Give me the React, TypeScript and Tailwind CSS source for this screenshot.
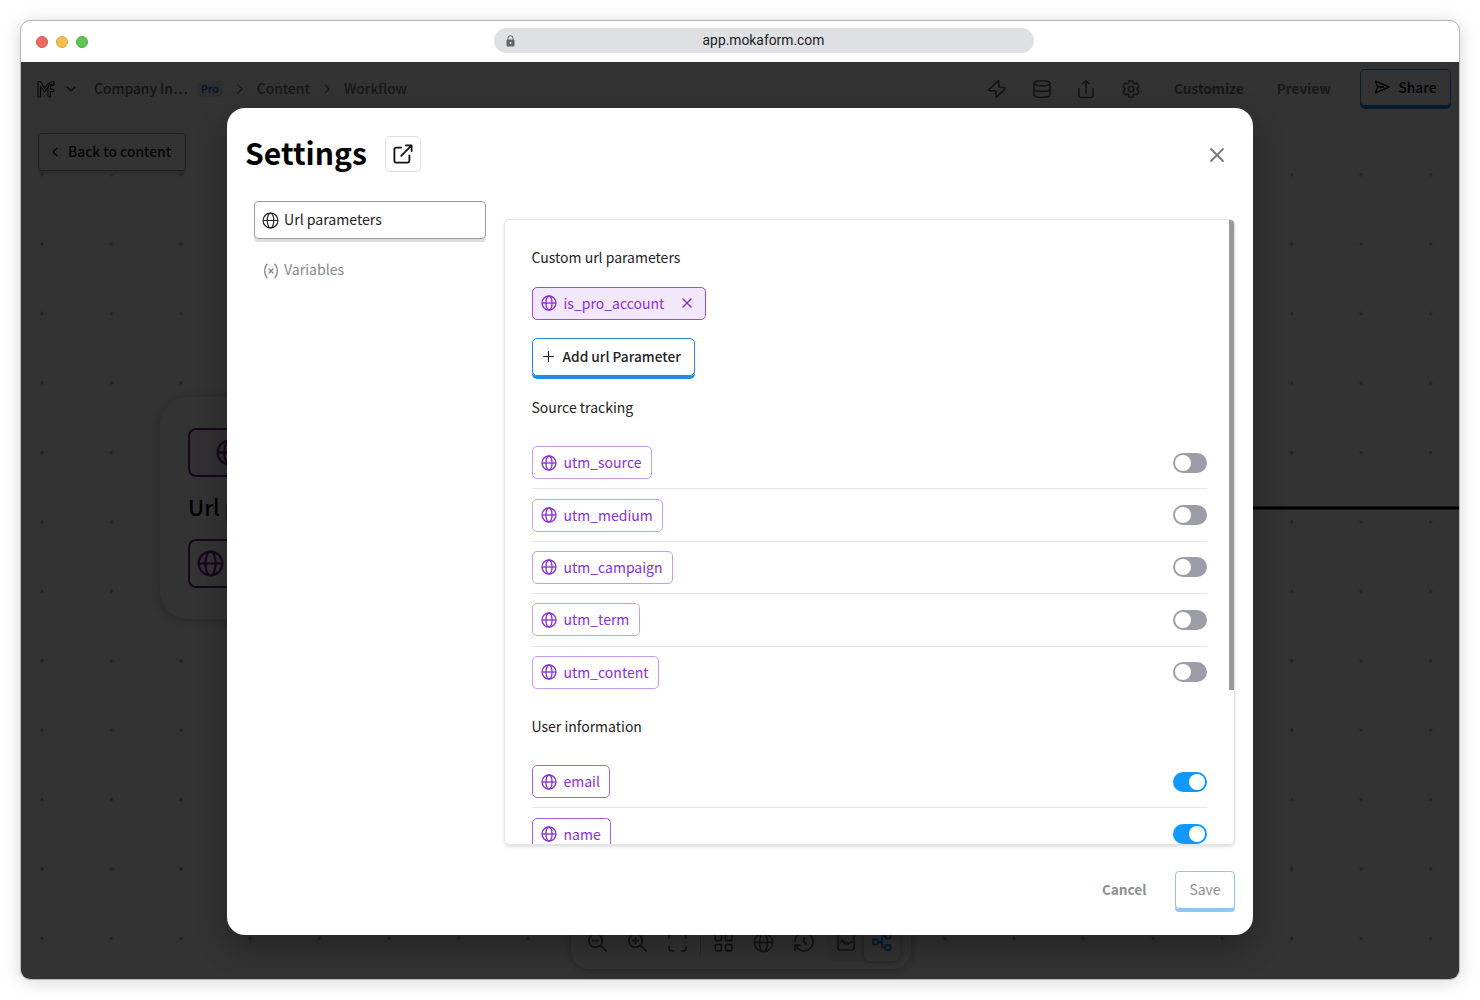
import { useState } from "react";
import { HiOutlineCog6Tooth } from "react-icons/hi2";
import {
  TbChevronDown,
  TbChevronLeft,
  TbChevronRight,
  TbHistory,
  TbLayoutGrid,
  TbMaximize,
  TbPlus,
  TbX,
  TbZoomIn,
  TbZoomOut,
} from "react-icons/tb";

type Param = { name: string; enabled: boolean };

const initialSource: Param[] = [
  { name: "utm_source", enabled: false },
  { name: "utm_medium", enabled: false },
  { name: "utm_campaign", enabled: false },
  { name: "utm_term", enabled: false },
  { name: "utm_content", enabled: false },
];

const initialUser: Param[] = [
  { name: "email", enabled: true },
  { name: "name", enabled: true },
];

const GlobeIcon = ({ className, stroke = 2 }: { className?: string; stroke?: number }) => (
  <svg viewBox="0 0 24 24" fill="none" stroke="currentColor" strokeWidth={stroke} className={className}>
    <circle cx="12" cy="12" r="10.5" />
    <ellipse cx="12" cy="12" rx="4.6" ry="10.5" />
    <path d="M1.5 12h21" />
  </svg>
);

const VariableIcon = ({ className }: { className?: string }) => (
  <svg viewBox="0 0 16 16" fill="none" stroke="currentColor" strokeWidth="1.4" strokeLinecap="round" className={className}>
    <path d="M4 1.2C.8 5 .8 11 4 14.8M12 1.2c3.2 3.8 3.2 9.8 0 13.6M6 6l4 4M10 6l-4 4" />
  </svg>
);

const OpenIcon = ({ className }: { className?: string }) => (
  <svg
    viewBox="0 0 20 20"
    fill="none"
    stroke="currentColor"
    strokeWidth="1.8"
    strokeLinecap="round"
    strokeLinejoin="round"
    className={className}
  >
    <path d="M8.3 3.6H3.2A1.8 1.8 0 0 0 1.4 5.4V16.8A1.8 1.8 0 0 0 3.2 18.6H14.6A1.8 1.8 0 0 0 16.4 16.8V11.3" />
    <path d="M8.2 11.8 18.6 1.4M13 1.4h5.6V7" />
  </svg>
);

const BoltIcon = () => (
  <svg viewBox="0 0 20 20" fill="none" stroke="currentColor" strokeWidth="1.6" strokeLinejoin="round" className="h-5 w-5">
    <path d="M11.3 1.7 1.9 10.7l.4.9 6.5.4.3 6.6 9.1-9-.4-.8-5.5-.8z" />
  </svg>
);

const DatabaseIcon = () => (
  <svg viewBox="0 0 20 20" fill="none" stroke="currentColor" strokeWidth="1.6" className="h-5 w-5">
    <ellipse cx="10" cy="4.3" rx="8" ry="2.6" />
    <path d="M2 4.3v11.4c0 1.6 3.2 2.6 8 2.6s8-1 8-2.6V4.3M2 10c0 1.5 3.2 2.4 8 2.4s8-.9 8-2.4" />
  </svg>
);

const UploadIcon = () => (
  <svg
    viewBox="0 0 20 20"
    fill="none"
    stroke="currentColor"
    strokeWidth="1.6"
    strokeLinecap="round"
    strokeLinejoin="round"
    className="h-5 w-5"
  >
    <path d="M3 9.5v7a2 2 0 0 0 2 2h10a2 2 0 0 0 2-2v-7M10 14V1.7M6.8 4.7 10 1.5l3.2 3.2" />
  </svg>
);

const SendIcon = () => (
  <svg viewBox="0 0 16 16" fill="none" stroke="currentColor" strokeWidth="1.4" strokeLinecap="round" strokeLinejoin="round" className="h-4 w-4">
    <path d="M1.5 2.2 15 8 1.5 13.8 3.6 8zM3.6 8h6" />
  </svg>
);

const Logo = ({ className }: { className?: string }) => (
  <svg viewBox="0 0 18 18" fill="none" stroke="currentColor" strokeWidth="1.2" strokeLinejoin="round" className={className}>
    <path d="M1 1.5v15.5h2.5V6.5l4 5.5 3.5-5v10h2.5v-5.500h3V9.200h-3V7c0-1.500 1-2.200 3.500-2.200V1.500c-3 0-4.500.8-6 2.500L7.500 8 3.500 1.500z" />
    <path d="M11 7l2-2.5h4" />
  </svg>
);

const Badge = ({ name, dim, onRemove }: { name: string; dim?: boolean; onRemove?: () => void }) => (
  <span
    className={`inline-flex h-[33px] items-center rounded-[5px] border pr-[9.5px] pl-[8.5px] text-[#8a2fd9] ${
      onRemove ? "border-[#9b4be0] bg-[#f3e8fb]" : dim ? "border-[#c79bee]" : "border-[#a862e6]"
    }`}
  >
    <GlobeIcon className="mr-[6.5px] h-4 w-4" />
    <span className="pb-px text-[14px] leading-5">{name}</span>
    {onRemove && (
      <button onClick={onRemove} className="ml-[15px]">
        <TbX className="h-4 w-4" />
      </button>
    )}
  </span>
);

const Toggle = ({ on, onClick }: { on: boolean; onClick: () => void }) => (
  <button
    onClick={onClick}
    className={`flex h-5 w-[34px] items-center rounded-full px-[2px] ${on ? "justify-end bg-[#1098fc]" : "justify-start bg-[#9d9da8]"}`}
  >
    <span className="h-4 w-4 rounded-full bg-white" />
  </button>
);

const ParamList = ({ items, dim, onToggle }: { items: Param[]; dim?: boolean; onToggle: (name: string) => void }) => (
  <div className="mt-[18px]">
    {items.map((item) => (
      <div
        key={item.name}
        className="flex h-[52.4px] items-center justify-between border-b border-[#e6e6e8] last:border-b-transparent"
      >
        <Badge name={item.name} dim={dim} />
        <Toggle on={item.enabled} onClick={() => onToggle(item.name)} />
      </div>
    ))}
  </div>
);

const Header = () => (
  <header className="flex h-[53px] items-center justify-between pr-[8px] pb-[2px] pl-[16px] text-[13.8px] font-medium text-[#777]">
    <div className="flex items-center pt-[2px]">
      <Logo className="h-[18px] w-[18px] text-[#333]" />
      <TbChevronDown className="ml-[8px] h-4 w-4 text-[#333]" />
      <span className="ml-[15px] text-[#666]">Company In…</span>
      <span className="ml-[9px] rounded bg-[#dcebf9] px-1 text-[10.5px] leading-4 font-bold text-[#1971c2]">Pro</span>
      <TbChevronRight className="ml-[9px] h-4 w-4" />
      <span className="ml-[9px]">Content</span>
      <TbChevronRight className="mx-[9px] h-4 w-4" />
      <span>Workflow</span>
    </div>
    <div className="flex items-center">
      <div className="flex items-center gap-[24.7px] pt-[2px] text-[#666]">
        <BoltIcon />
        <DatabaseIcon />
        <UploadIcon />
        <HiOutlineCog6Tooth className="-mx-px h-[22px] w-[22px]" strokeWidth={1.8} />
      </div>
      <span className="ml-[33px] pt-[2px] text-[13.6px] font-bold">Customize</span>
      <span className="ml-[33px] pt-[2px] text-[13.6px] font-bold">Preview</span>
      <button className="ml-[29px] flex h-[37px] w-[91px] items-center justify-center gap-[8px] rounded-[5px] border border-[#228be6] pb-px text-black shadow-[0_3px_0_#228be6]">
        <SendIcon />
        Share
      </button>
    </div>
  </header>
);

const Canvas = () => (
  <div className="relative flex-1 overflow-hidden">
    <svg className="absolute inset-0 h-full w-full">
      <defs>
        <pattern id="dots" width="69.43" height="69.43" patternUnits="userSpaceOnUse" x="-13.7" y="24.9">
          <circle cx="34.7" cy="34.7" r="1.7" fill="#a8a8a8" />
        </pattern>
      </defs>
      <rect width="100%" height="100%" fill="url(#dots)" />
      <path d="M1100 393h340" stroke="#000" strokeWidth="3" />
    </svg>

    <button className="absolute top-[18px] left-[17px] flex h-[38px] w-[148px] items-center gap-[5px] rounded-[4px] border border-[#999] bg-white pb-px pl-[8px] text-[13.8px] font-medium text-[#222] shadow-[0_3px_0_#e3e2e0]">
      <TbChevronLeft className="h-4 w-4" />
      Back to content
    </button>

    {/* workflow node */}
    <div className="absolute top-[282px] left-[139px] flex h-[222px] w-[300px] flex-col rounded-[28px] bg-white px-[28px] pt-[31px] shadow-[0_2px_12px_rgba(0,0,0,0.25)]">
      <div className="flex h-[49px] items-center rounded-lg border-2 border-[#7b1fa2] bg-[#f3e8fb] pl-[26px] text-[#7b1fa2]">
        <GlobeIcon className="h-[27px] w-[27px]" />
      </div>
      <div className="mt-[13px] mb-[16px] text-[22px] leading-[33px] font-medium text-black">Url parameters</div>
      <div className="flex h-[49px] items-center rounded-lg border-2 border-[#7b1fa2] pl-[7px] text-[#7b1fa2]">
        <GlobeIcon className="h-[27px] w-[27px]" />
      </div>
    </div>

    {/* zoom and view controls */}
    <div className="absolute bottom-[10px] left-[550px] flex h-[54px] w-[340px] items-center rounded-[18px] bg-white pl-[15px] text-[#666] shadow-[0_1px_8px_rgba(0,0,0,0.3)]">
      <TbZoomOut className="h-[23px] w-[23px]" strokeWidth={1.8} />
      <TbZoomIn className="ml-[17px] h-[23px] w-[23px]" strokeWidth={1.8} />
      <TbMaximize className="ml-[16px] h-[25px] w-[25px]" strokeWidth={1.8} />
      <span className="ml-[10px] h-[30px] w-px bg-[#ccc]" />
      <TbLayoutGrid className="ml-[10px] h-[25px] w-[25px]" strokeWidth={1.6} />
      <GlobeIcon className="ml-[17px] h-[21px] w-[21px]" />
      <TbHistory className="ml-[18px] h-[24px] w-[24px]" strokeWidth={1.8} />
      <div className="ml-[11px] flex h-[37px] items-center rounded-md bg-[#f1f1f3]">
        <svg viewBox="0 0 20 20" className="mr-[8px] ml-[9px] h-5 w-5" fill="none" stroke="currentColor" strokeWidth="1.7" strokeLinejoin="round">
          <rect x="2" y="2" width="16" height="16" rx="1.5" />
          <path d="M4 10.5l2.5-2.5 2.5 4 1.5-1.5 1.5 1.5 4-2.5" />
        </svg>
        <div className="flex h-[37px] w-[36px] items-center justify-center rounded-md bg-white text-[#228be6] shadow-[0_1px_5px_rgba(0,0,0,0.35)]">
          <svg viewBox="0 0 20 20" className="h-5 w-5" fill="none" stroke="currentColor" strokeWidth="1.9">
            <rect x="1" y="7.5" width="5" height="5" rx=".8" />
            <rect x="13.5" y="1.5" width="5" height="5" rx=".8" />
            <rect x="13.5" y="13" width="5" height="5" rx=".8" />
            <path d="M6 10h4M13.5 4h-2.2A1.3 1.3 0 0 0 10 5.3v8.9a1.3 1.3 0 0 0 1.3 1.3h2.2" />
          </svg>
        </div>
      </div>
    </div>
  </div>
);

const SettingsModal = () => {
  const [source, setSource] = useState(initialSource);
  const [user, setUser] = useState(initialUser);
  const [custom, setCustom] = useState(["is_pro_account"]);

  const toggle = (items: Param[], name: string) =>
    items.map((item) => (item.name === name ? { ...item, enabled: !item.enabled } : item));

  return (
    <div className="flex h-[827px] w-[1026px] flex-col rounded-[18px] bg-white pr-[18px] pl-[19px] shadow-[0_12px_30px_rgba(0,0,0,0.3)]">
      <div className="flex h-[93px] shrink-0 items-center">
        <h1 className="-ml-px pb-[5px] text-[30.1px] leading-10 font-bold text-black">Settings</h1>
        <button className="mb-px ml-[18px] flex h-9 w-9 items-center justify-center rounded-[5px] border border-[#dcdde6] text-[#111]">
          <OpenIcon className="h-5 w-5" />
        </button>
        <button className="mr-[6px] ml-auto text-[#777780]">
          <TbX className="h-6 w-6" strokeWidth={1.8} />
        </button>
      </div>

      <div className="flex">
        <nav className="flex w-[258px] shrink-0 flex-col pr-[18px] pl-[8px] text-[14.1px]">
          <button className="flex h-[38px] items-center gap-[5px] rounded-[4px] border border-[#999] pl-[7px] text-[#222] shadow-[0_3px_0_#dddddb]">
            <GlobeIcon className="h-[17px] w-[17px]" stroke={1.6} />
            <span className="pb-px">Url parameters</span>
          </button>
          <button className="mt-[13px] flex h-[37px] items-center gap-[5px] pl-[9px] text-[#888]">
            <VariableIcon className="h-4 w-4" />
            <span className="pb-px">Variables</span>
          </button>
        </nav>

        <div className="mt-[18px] flex h-[626px] flex-1 overflow-hidden rounded-[5px] border border-[#e4e4e8] text-[#222] shadow-[0_2px_3px_rgba(0,0,0,0.12)]">
          <div className="flex-1 pt-[24.5px] pr-[22px] pl-[26.5px] text-[14px] leading-6">
            <div>Custom url parameters</div>
            <div className="mt-[18px] flex h-[33px] gap-2">
              {custom.map((name) => (
                <Badge key={name} name={name} onRemove={() => setCustom(custom.filter((n) => n !== name))} />
              ))}
            </div>
            <button className="mt-[18px] mb-[3px] flex h-[38px] items-center gap-[6px] rounded-[5px] border border-[#228be6] pr-[13px] pl-[7px] text-[13.7px] font-medium shadow-[0_3px_0_#228be6]">
              <TbPlus className="h-[17px] w-[17px]" strokeWidth={1.6} />
              <span className="pb-[2px]">Add url Parameter</span>
            </button>
            <div className="mt-[19.5px]">Source tracking</div>
            <ParamList items={source} dim onToggle={(name) => setSource(toggle(source, name))} />
            <div className="mt-[15px]">User information</div>
            <ParamList items={user} onToggle={(name) => setUser(toggle(user, name))} />
          </div>
          <div className="h-[470px] w-[5px] bg-[#999]" />
        </div>
      </div>

      <div className="mt-[26px] flex items-start justify-end text-[14px] text-[#8f8f8f]">
        <button className="mr-[28.5px] h-[37px] text-[13.6px] font-bold">Cancel</button>
        <button className="h-[38px] w-[60px] rounded-[4px] border border-[#8fc3f0] pb-[2px] shadow-[0_3px_0_#93c5f1]">Save</button>
      </div>
    </div>
  );
};

export default function App() {
  return (
    <div className="h-[1000px] w-[1480px] bg-white p-5 font-['Noto_Sans_CJK_SC',sans-serif]">
      <div className="flex h-[960px] w-[1440px] flex-col overflow-hidden rounded-[10px] border border-[#b5b5b5] bg-white shadow-[0_2px_18px_rgba(0,0,0,0.16)]">
        <div className="grid h-[41px] shrink-0 grid-cols-[473px_540px_1fr] items-center">
          <div className="flex gap-2 pl-[15px]">
            <span className="h-3 w-3 rounded-full border border-[#d8584c] bg-[#ed6a5e]" />
            <span className="h-3 w-3 rounded-full border border-[#dba63c] bg-[#f4bf50]" />
            <span className="h-3 w-3 rounded-full border border-[#51ab42] bg-[#61c555]" />
          </div>
          <div className="mb-[2px] flex h-[25px] items-center rounded-full bg-[#dfe0e4] pr-[22px] pl-[12px] font-[Roboto,sans-serif] text-[13.85px] text-[#202124]">
            <svg viewBox="0 0 9 12" className="h-3 w-[9px] text-[#636466]">
              <path d="M2 5V3.2a2.5 2.5 0 0 1 5 0V5" fill="none" stroke="currentColor" />
              <rect x=".5" y="4.5" width="8" height="7" rx="1" fill="currentColor" />
              <circle cx="4.5" cy="8" r="1" fill="#dfe0e4" />
            </svg>
            <span className="flex-1 text-center">app.mokaform.com</span>
          </div>
        </div>

        <div className="relative flex flex-1 flex-col">
          <Header />
          <Canvas />
          <div className="absolute inset-0 flex justify-center bg-black/80 pt-[46px]">
            <SettingsModal />
          </div>
        </div>
      </div>
    </div>
  );
}
